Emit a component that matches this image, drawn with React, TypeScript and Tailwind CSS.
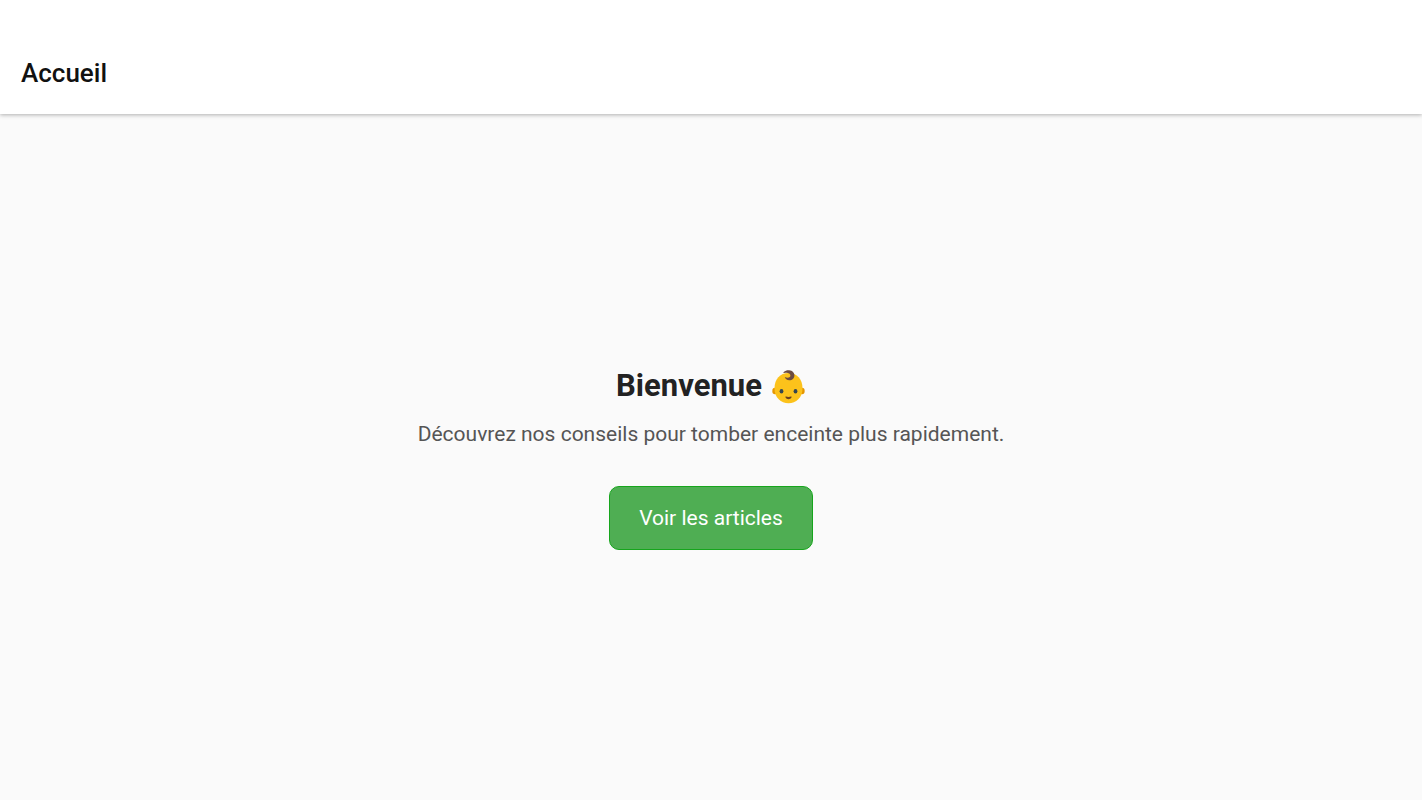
import type { SVGProps } from "react";

function BabyFace(props: SVGProps<SVGSVGElement>) {
  return (
    <svg viewBox="0 0 36 36" role="img" aria-label="Bébé" {...props}>
      {/* Ears */}
      <ellipse cx="5" cy="23" rx="2.7" ry="3.2" fill="#e59600" />
      <ellipse cx="32" cy="23" rx="2.7" ry="3.2" fill="#e59600" />
      {/* Head */}
      <path
        d="M18.500 5C10 5 4.500 11 4.500 20.500c0 9.300 6.500 14.700 14 14.700s14-5.400 14-14.700C32.500 11 27 5 18.500 5Z"
        fill="#fcc21b"
      />
      {/* Curl */}
      <path
        d="M13.800 4C15.200 2.600 17.200 2 19.200 2.200c3.200.3 5.300 2.500 5.200 5.200 0 2.900-2.300 4.900-5.100 4.800-2.300-.1-4.200-1.300-4.500-3.300 1.600 1.100 3.900 1.100 5 0 1-1 .7-2.700-.6-3.500-1.500-.9-3.500-.6-5.200-.3-.7.100-.7-.6-.2-1.100Z"
        fill="#6d4c41"
      />
      {/* Eyes and mouth */}
      <ellipse cx="11.500" cy="23.300" rx="1.900" ry="2.300" fill="#354650" />
      <ellipse cx="25.500" cy="23.300" rx="1.900" ry="2.300" fill="#354650" />
      <path
        d="M16 28.500c1.600.5 3.400.5 5 0 .5-.1.800.2.600.7-.6 1.300-1.800 2-3.100 2s-2.500-.7-3.100-2c-.2-.5.1-.8.600-.7Z"
        fill="#6b4220"
      />
    </svg>
  );
}

export default function App() {
  return (
    <div className="flex min-h-screen flex-col bg-[#fafafa] font-['Roboto',sans-serif]">
      <header className="z-10 bg-white px-[21px] pt-14 pb-6 shadow-[0_1px_4px_rgba(0,0,0,0.3)]">
        <h1 className="text-[26px] leading-[34px] font-medium text-[#111]">Accueil</h1>
      </header>

      <main className="flex flex-1 flex-col items-center justify-center px-5 text-center">
        <h2 className="flex items-center gap-2 text-[31px] leading-[44px] font-bold text-[#222]">
          Bienvenue
          <BabyFace className="h-9 w-9" />
        </h2>
        <p className="mt-3 text-[21px] leading-7 text-[#555]">
          Découvrez nos conseils pour tomber enceinte plus rapidement.
        </p>
        <button
          type="button"
          className="mt-[38px] rounded-[10px] border border-[#16a51c] bg-[#4fae53] px-[29px] py-[15px] text-[21px] leading-8 text-white"
        >
          Voir les articles
        </button>
      </main>
    </div>
  );
}
